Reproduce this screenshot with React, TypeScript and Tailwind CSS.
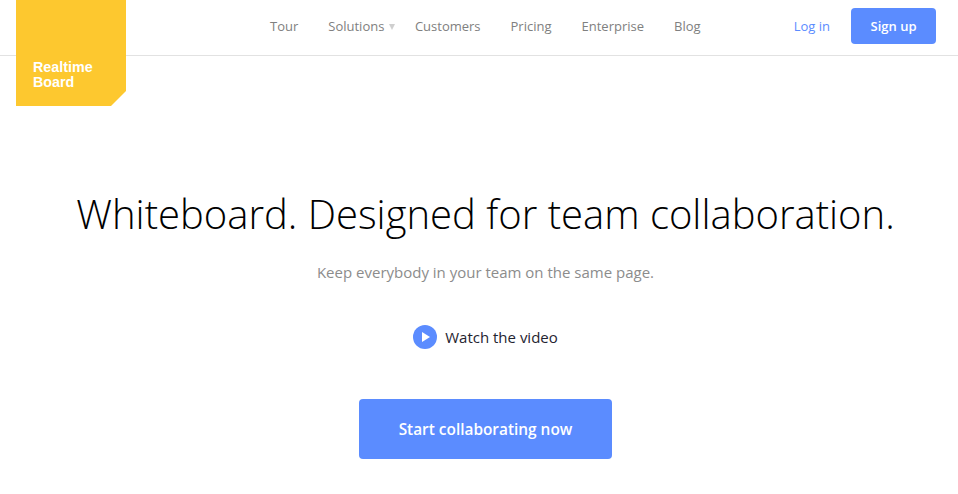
const navLinks = ['Tour', 'Solutions', 'Customers', 'Pricing', 'Enterprise', 'Blog'];

function Logo() {
  return (
    <a className="absolute left-4 top-0 flex h-[106px] w-[110px] items-end bg-[#fdc82f] pb-[16px] pl-[17px] [clip-path:polygon(0_0,100%_0,100%_91px,95px_100%,0_100%)] font-['Liberation_Sans',sans-serif] text-[14.3px] leading-[15px] font-bold text-white">
      <span>
        Realtime
        <br />
        Board
      </span>
    </a>
  );
}

function Header() {
  return (
    <header className="flex h-14 items-center border-b border-[#e2e2e2] pr-[22px] pb-[4px] pl-[270px]">
      <nav className="flex items-center gap-[30px] pt-[2px] text-[13px] text-[#808080]">
        {navLinks.map((link) => (
          <a key={link} className="flex items-center">
            {link}
            {link === 'Solutions' && <span className="mr-[-10.5px] ml-[5px] h-0 w-0 border-x-[3.5px] border-t-[6px] border-x-transparent border-t-[#cfcfcf]" />}
          </a>
        ))}
      </nav>
      <div className="ml-auto flex items-center gap-[21px] text-[13px]">
        <a className="pt-[2px] font-medium text-[#5b8cff]">Log in</a>
        <a className="flex h-9 w-[85px] items-center justify-center rounded bg-[#5b8cff] pt-[2px] font-semibold text-white">Sign up</a>
      </div>
    </header>
  );
}

export default function App() {
  return (
    <div className="relative h-[494px] overflow-hidden bg-white font-['Open_Sans',sans-serif]">
      <Logo />
      <Header />
      <main className="flex flex-col items-center pl-[13px]">
        <h1 className="mt-[129px] text-[40px] leading-[58px] font-light text-black">Whiteboard. Designed for team collaboration.</h1>
        <p className="mt-[19px] text-[15px] leading-5 text-[#8c8c8c]">Keep everybody in your team on the same page.</p>
        <a className="mt-[43px] flex items-center gap-[8px] text-[15px] text-[#1f2430]">
          <svg width="24" height="24" viewBox="0 0 24 24">
            <circle cx="12" cy="12" r="12" fill="#5b8cff" />
            <path d="M9 7 L17 12 L9 17 Z" fill="#fff" />
          </svg>
          Watch the video
        </a>
        <a className="mt-[50px] flex h-[60px] w-[253px] items-center justify-center rounded bg-[#5b8cff] pt-[2px] text-[15.4px] font-semibold text-white">Start collaborating now</a>
      </main>
    </div>
  );
}
